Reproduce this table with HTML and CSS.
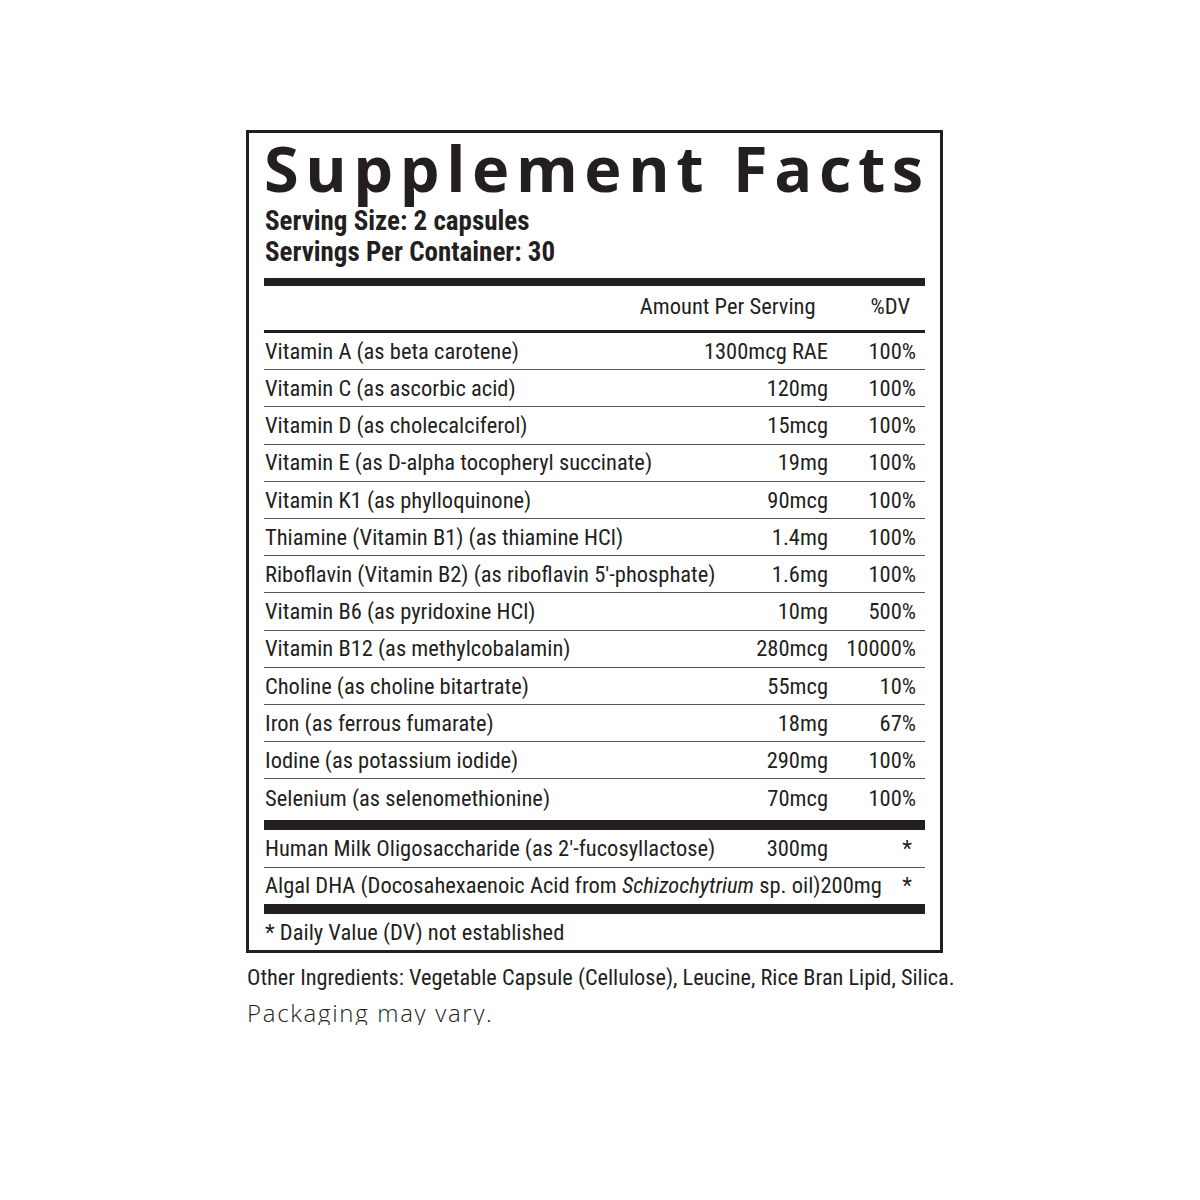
FILE: index.html
```html
<!DOCTYPE html>
<html lang="en">
<head>
<meta charset="utf-8">
<title>Supplement Facts</title>
<link rel="stylesheet" href="styles.css">
</head>
<body>
<div class="page">
  <div class="label">
    <h1 class="title">Supplement Facts</h1>
    <div class="serving">
      <div>Serving Size: 2 capsules</div>
      <div>Servings Per Container: 30</div>
    </div>
    <div class="bar bar-top"></div>
    <div class="head-row">
      <span class="h-amt">Amount Per Serving</span>
      <span class="h-dv">%DV</span>
    </div>
    <div class="bar bar-mid"></div>
    <div class="rows">
      <div class="row"><span class="name">Vitamin A (as beta carotene)</span><span class="amt">1300mcg RAE</span><span class="dv">100%</span></div>
      <div class="row"><span class="name">Vitamin C (as ascorbic acid)</span><span class="amt">120mg</span><span class="dv">100%</span></div>
      <div class="row"><span class="name">Vitamin D (as cholecalciferol)</span><span class="amt">15mcg</span><span class="dv">100%</span></div>
      <div class="row"><span class="name">Vitamin E (as D-alpha tocopheryl succinate)</span><span class="amt">19mg</span><span class="dv">100%</span></div>
      <div class="row"><span class="name">Vitamin K1 (as phylloquinone)</span><span class="amt">90mcg</span><span class="dv">100%</span></div>
      <div class="row"><span class="name">Thiamine (Vitamin B1) (as thiamine HCl)</span><span class="amt">1.4mg</span><span class="dv">100%</span></div>
      <div class="row"><span class="name">Riboflavin (Vitamin B2) (as riboflavin 5′-phosphate)</span><span class="amt">1.6mg</span><span class="dv">100%</span></div>
      <div class="row"><span class="name">Vitamin B6 (as pyridoxine HCl)</span><span class="amt">10mg</span><span class="dv">500%</span></div>
      <div class="row"><span class="name">Vitamin B12 (as methylcobalamin)</span><span class="amt">280mcg</span><span class="dv">10000%</span></div>
      <div class="row"><span class="name">Choline (as choline bitartrate)</span><span class="amt">55mcg</span><span class="dv">10%</span></div>
      <div class="row"><span class="name">Iron (as ferrous fumarate)</span><span class="amt">18mg</span><span class="dv">67%</span></div>
      <div class="row"><span class="name">Iodine (as potassium iodide)</span><span class="amt">290mg</span><span class="dv">100%</span></div>
      <div class="row row-last"><span class="name">Selenium (as selenomethionine)</span><span class="amt">70mcg</span><span class="dv">100%</span></div>
    </div>
    <div class="bar bar-thick"></div>
    <div class="row row-hmo"><span class="name">Human Milk Oligosaccharide (as 2′-fucosyllactose)</span><span class="amt">300mg</span><span class="dv">*</span></div>
    <div class="row row-dha"><span class="name">Algal DHA (Docosahexaenoic Acid from <em>Schizochytrium</em> sp. oil)</span><span class="amt">200mg</span><span class="dv">*</span></div>
    <div class="bar bar-thick"></div>
    <div class="footnote">* Daily Value (DV) not established</div>
  </div>
  <p class="other">Other Ingredients: Vegetable Capsule (Cellulose), Leucine, Rice Bran Lipid, Silica.</p>
  <p class="packaging">Packaging may vary.</p>
</div>
</body>
</html>
```

FILE: styles.css
```css
html, body {
  margin: 0;
  padding: 0;
  background: #ffffff;
}

body {
  color: #231f20;
  font-family: "Liberation Sans Narrow", "Roboto Condensed", "DejaVu Sans Condensed", sans-serif;
}

.page {
  padding: 130px 0 0 246px;
}

.label {
  width: 697px;
  box-sizing: border-box;
  border: 3px solid #231f20;
  padding: 0 15px;
  display: flex;
  flex-direction: column;
}

.title {
  margin: 8px 0 0 0;
  font-family: "Open Sans", "Liberation Sans", sans-serif;
  font-weight: 700;
  font-size: 63px;
  line-height: 54px;
  height: 58px;
  letter-spacing: 6.6px;
  white-space: nowrap;
}

.serving {
  margin-top: 8.5px;
  font-weight: 700;
  font-size: 27px;
  line-height: 26px;
  padding-left: 1px;
  display: flex;
  flex-direction: column;
  gap: 5px;
}

.bar {
  background: #231f20;
}

.bar-top {
  height: 8px;
  margin-top: 13.5px;
}

.bar-mid {
  height: 3px;
}

.bar-thick {
  height: 10px;
}

.head-row {
  height: 44px;
  box-sizing: border-box;
  padding-bottom: 4px;
  display: flex;
  align-items: center;
  justify-content: flex-end;
  font-size: 22.5px;
  line-height: 1;
}

.h-amt {
  padding-right: 55px;
}

.h-dv {
  padding-right: 15px;
}

.rows {
  display: flex;
  flex-direction: column;
}

.row {
  height: 37.2px;
  box-sizing: border-box;
  border-bottom: 1px solid #555;
  display: flex;
  align-items: center;
  padding: 0 9px 0 1px;
  font-size: 22.5px;
  line-height: 1;
  white-space: nowrap;
}

.row-last {
  border-bottom: none;
  margin-bottom: 3.4px;
}

.name {
  flex: 1 1 auto;
}

.amt {
  text-align: right;
}

.dv {
  width: 88px;
  text-align: right;
}

.row-hmo {
  height: 37.7px;
}

.row-hmo .dv {
  padding-right: 4px;
  box-sizing: border-box;
}

.row-dha {
  height: 36.3px;
  border-bottom: none;
}

.row-dha .name {
  flex: none;
}

.row-dha .dv {
  flex: 1 1 auto;
  width: auto;
  padding-right: 4px;
}

.row-dha em {
  font-style: italic;
}

.footnote {
  height: 36px;
  display: flex;
  align-items: center;
  padding-left: 1px;
  font-size: 22.5px;
  line-height: 1;
}

.other {
  margin: 13px 0 0 1px;
  font-size: 22.3px;
  line-height: 1;
  white-space: nowrap;
}

.packaging {
  margin: 13px 0 0 1px;
  font-family: "Open Sans", "Lato", sans-serif;
  font-weight: 300;
  font-size: 24px;
  line-height: 1;
  letter-spacing: 1.7px;
  color: #231f20;
}
```
